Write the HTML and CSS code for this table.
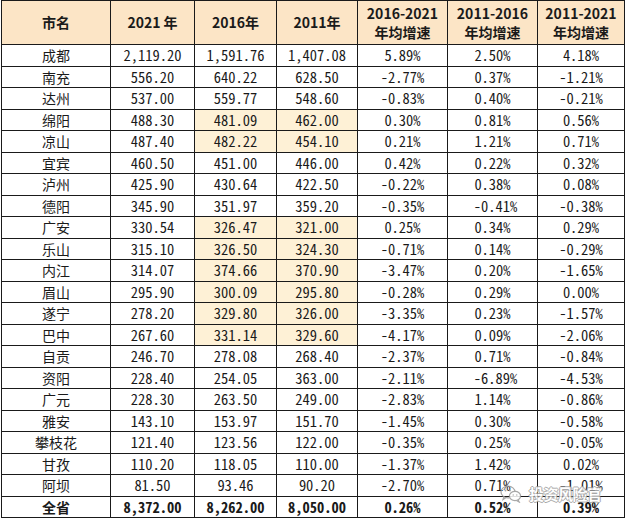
FILE: index.html
```html
<!DOCTYPE html>
<html lang="zh">
<head>
<meta charset="utf-8">
<title>四川各市GDP</title>
<link rel="stylesheet" href="styles.css">
</head>
<body>
<div class="wrap">
<table class="gdp">
<colgroup>
<col class="c-name"><col class="c-y1"><col class="c-y2"><col class="c-y3"><col class="c-g1"><col class="c-g2"><col class="c-g3">
</colgroup>
<thead>
<tr>
<th>市名</th><th>2021 年</th><th>2016年</th><th>2011年</th>
<th>2016-2021<br>年均增速</th><th>2011-2016<br>年均增速</th><th>2011-2021<br>年均增速</th>
</tr>
</thead>
<tbody>
<tr><td class="name">成都</td><td>2,119.20</td><td>1,591.76</td><td>1,407.08</td><td>5.89%</td><td>2.50%</td><td>4.18%</td></tr>
<tr><td class="name">南充</td><td>556.20</td><td>640.22</td><td>628.50</td><td>-2.77%</td><td>0.37%</td><td>-1.21%</td></tr>
<tr><td class="name">达州</td><td>537.00</td><td>559.77</td><td>548.60</td><td>-0.83%</td><td>0.40%</td><td>-0.21%</td></tr>
<tr><td class="name">绵阳</td><td>488.30</td><td class="hl">481.09</td><td class="hl">462.00</td><td>0.30%</td><td>0.81%</td><td>0.56%</td></tr>
<tr><td class="name">凉山</td><td>487.40</td><td class="hl">482.22</td><td class="hl">454.10</td><td>0.21%</td><td>1.21%</td><td>0.71%</td></tr>
<tr><td class="name">宜宾</td><td>460.50</td><td>451.00</td><td>446.00</td><td>0.42%</td><td>0.22%</td><td>0.32%</td></tr>
<tr><td class="name">泸州</td><td>425.90</td><td>430.64</td><td>422.50</td><td>-0.22%</td><td>0.38%</td><td>0.08%</td></tr>
<tr><td class="name">德阳</td><td>345.90</td><td>351.97</td><td>359.20</td><td>-0.35%</td><td class="shift">-0.41%</td><td>-0.38%</td></tr>
<tr><td class="name">广安</td><td>330.54</td><td class="hl">326.47</td><td class="hl">321.00</td><td>0.25%</td><td>0.34%</td><td>0.29%</td></tr>
<tr><td class="name">乐山</td><td>315.10</td><td class="hl">326.50</td><td class="hl">324.30</td><td>-0.71%</td><td>0.14%</td><td>-0.29%</td></tr>
<tr><td class="name">内江</td><td>314.07</td><td class="hl">374.66</td><td class="hl">370.90</td><td>-3.47%</td><td>0.20%</td><td>-1.65%</td></tr>
<tr><td class="name">眉山</td><td>295.90</td><td class="hl">300.09</td><td class="hl">295.80</td><td>-0.28%</td><td>0.29%</td><td>0.00%</td></tr>
<tr><td class="name">遂宁</td><td>278.20</td><td class="hl">329.80</td><td class="hl">326.00</td><td>-3.35%</td><td>0.23%</td><td>-1.57%</td></tr>
<tr><td class="name">巴中</td><td>267.60</td><td class="hl">331.14</td><td class="hl">329.60</td><td>-4.17%</td><td>0.09%</td><td>-2.06%</td></tr>
<tr><td class="name">自贡</td><td>246.70</td><td>278.08</td><td>268.40</td><td>-2.37%</td><td>0.71%</td><td>-0.84%</td></tr>
<tr><td class="name">资阳</td><td>228.40</td><td>254.05</td><td>363.00</td><td>-2.11%</td><td class="shift">-6.89%</td><td>-4.53%</td></tr>
<tr><td class="name">广元</td><td>228.30</td><td>263.50</td><td>249.00</td><td>-2.83%</td><td>1.14%</td><td>-0.86%</td></tr>
<tr><td class="name">雅安</td><td>143.10</td><td>153.97</td><td>151.70</td><td>-1.45%</td><td>0.30%</td><td>-0.58%</td></tr>
<tr><td class="name">攀枝花</td><td>121.40</td><td>123.56</td><td>122.00</td><td>-0.35%</td><td>0.25%</td><td>-0.05%</td></tr>
<tr><td class="name">甘孜</td><td>110.20</td><td>118.05</td><td>110.00</td><td>-1.37%</td><td>1.42%</td><td>0.02%</td></tr>
<tr><td class="name">阿坝</td><td>81.50</td><td>93.46</td><td>90.20</td><td>-2.70%</td><td>0.71%</td><td>-1.01%</td></tr>
<tr class="total"><td class="name">全省</td><td>8,372.00</td><td>8,262.00</td><td>8,050.00</td><td>0.26%</td><td>0.52%</td><td>0.39%</td></tr>
</tbody>
</table>
<div class="watermark">
<svg class="wm-icon" width="22" height="18" viewBox="0 0 22 18" aria-hidden="true">
<ellipse cx="8" cy="7" rx="7" ry="5.8" fill="none" stroke="#9a9a9a" stroke-width="1.2"/>
<path d="M4 11.5 L3 14.5 L6.5 12.3" fill="none" stroke="#9a9a9a" stroke-width="1.2"/>
<ellipse cx="15" cy="11" rx="5.6" ry="4.6" fill="#fff" stroke="#9a9a9a" stroke-width="1.2"/>
<path d="M18 14.8 L19.2 17 L16.4 15.4" fill="none" stroke="#9a9a9a" stroke-width="1.2"/>
<circle cx="5.5" cy="5.5" r="0.9" fill="#9a9a9a"/>
<circle cx="10" cy="5.5" r="0.9" fill="#9a9a9a"/>
<circle cx="13.2" cy="10" r="0.7" fill="#9a9a9a"/>
<circle cx="16.8" cy="10" r="0.7" fill="#9a9a9a"/>
</svg>
<span class="wm-text">投资风险官</span>
</div>
</div>
</body>
</html>
```

FILE: styles.css
```css
html, body {
  margin: 0;
  padding: 0;
  background: #ffffff;
}

.wrap {
  position: relative;
  width: 625px;
  height: 520px;
  padding-left: 1px;
  box-sizing: border-box;
}

.gdp {
  border-collapse: collapse;
  table-layout: fixed;
  width: 623px;
  color: #111;
}

.c-name { width: 109px; }
.c-y1 { width: 84px; }
.c-y2 { width: 82px; }
.c-y3 { width: 81px; }
.c-g1 { width: 90px; }
.c-g2 { width: 90px; }
.c-g3 { width: 87px; }

.gdp th,
.gdp td {
  border: 1px solid #1a1a1a;
  padding: 0;
  text-align: center;
  vertical-align: middle;
  white-space: nowrap;
  overflow: hidden;
}

.gdp thead tr {
  height: 44px;
}

.gdp th {
  background: #fce5c6;
  font-family: "Noto Sans CJK SC", "Noto Sans", sans-serif;
  font-weight: 700;
  font-size: 14px;
  line-height: 19px;
  color: #1a1a1a;
}

.gdp tbody tr {
  height: 21.5px;
}

.gdp td {
  font-family: "Noto Sans Mono CJK SC", "Liberation Mono", monospace;
  font-size: 14.5px;
  letter-spacing: 0;
  line-height: 16px;
  color: #1a1a1a;
}

.gdp td.name {
  font-family: "Noto Sans CJK SC", "Noto Sans", sans-serif;
  font-size: 14px;
  letter-spacing: 0;
}

.gdp td.hl {
  background: #fef1d6;
}

.gdp td.shift {
  padding-left: 6px;
}

.gdp tr.total td {
  font-weight: 700;
}

.watermark {
  position: absolute;
  left: 500px;
  top: 483px;
  display: flex;
  align-items: center;
  gap: 7px;
  opacity: 0.85;
}

.wm-text {
  font-family: "Noto Sans CJK SC", sans-serif;
  font-size: 15px;
  font-weight: 700;
  color: #ffffff;
  text-shadow: 1px 0 0 #9a9a9a, -1px 0 0 #9a9a9a, 0 1px 0 #9a9a9a, 0 -1px 0 #9a9a9a;
  letter-spacing: -0.5px;
}
```
